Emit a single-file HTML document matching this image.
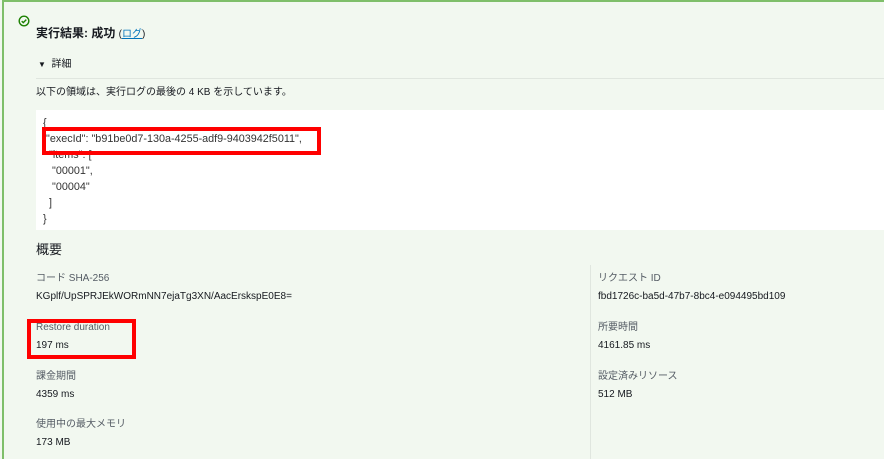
<!DOCTYPE html>
<html><head><meta charset="utf-8"><style>
body{margin:0;width:884px;height:459px;overflow:hidden;background:#f2f8f0;font-family:"Liberation Sans","Noto Sans CJK JP",sans-serif;color:#16191f;position:relative}
.a{position:absolute;white-space:nowrap;line-height:1}
.s{font-size:10px}
.l{color:#545b64}
</style></head><body>
<div style="position:absolute;left:2px;top:0;width:2px;height:459px;background:#7fbf6a"></div>
<div style="position:absolute;left:2px;top:0;width:882px;height:2px;background:#7fbf6a"></div>
<svg class="a" style="left:18px;top:15px" width="12" height="12" viewBox="0 0 12 12"><circle cx="6" cy="6" r="4.8" fill="none" stroke="#1d8102" stroke-width="1.4"/><path d="M3.7 6.1l1.6 1.5 3-3" fill="none" stroke="#1d8102" stroke-width="1.4"/></svg>
<div class="a" style="left:36px;top:27px;font-size:12px;font-weight:bold">実行結果: 成功 <span style="font-weight:normal;font-size:10px">(<span style="color:#0073bb;text-decoration:underline">ログ</span>)</span></div>
<div class="a s" style="left:38px;top:60px"><span style="font-size:8px">▼</span>&nbsp; 詳細</div>
<div style="position:absolute;left:36px;top:78px;width:848px;height:1px;background:#e0e6df"></div>
<div class="a s" style="left:36px;top:88px">以下の領域は、実行ログの最後の 4 KB を示しています。</div>
<div style="position:absolute;left:36px;top:110px;width:848px;height:120px;background:#fff"></div>
<div class="a" style="left:43px;top:115px;font-size:10.8px;line-height:16px;color:#333">{<br>&nbsp;"execId": "b91be0d7-130a-4255-adf9-9403942f5011",<br>&nbsp;&nbsp;"items": [<br>&nbsp;&nbsp;&nbsp;"00001",<br>&nbsp;&nbsp;&nbsp;"00004"<br>&nbsp;&nbsp;]<br>}</div>
<div style="position:absolute;left:42px;top:127px;width:271px;height:20px;border:4px solid #f00"></div>
<div class="a" style="left:36px;top:243px;font-size:13px">概要</div>
<div style="position:absolute;left:590px;top:265px;width:1px;height:194px;background:#e0e6df"></div>
<div class="a s l" style="left:36px;top:274px">コード SHA-256</div>
<div class="a s" style="left:36px;top:292px">KGplf/UpSPRJEkWORmNN7ejaTg3XN/AacErskspE0E8=</div>
<div class="a s l" style="left:36px;top:323px">Restore duration</div>
<div class="a s" style="left:36px;top:341px">197 ms</div>
<div style="position:absolute;left:27px;top:319px;width:101px;height:32px;border:4px solid #f00"></div>
<div class="a s l" style="left:36px;top:372px">課金期間</div>
<div class="a s" style="left:36px;top:390px">4359 ms</div>
<div class="a s l" style="left:36px;top:420px">使用中の最大メモリ</div>
<div class="a s" style="left:36px;top:438px">173 MB</div>
<div class="a s l" style="left:598px;top:274px">リクエスト ID</div>
<div class="a s" style="left:598px;top:292px">fbd1726c-ba5d-47b7-8bc4-e094495bd109</div>
<div class="a s l" style="left:598px;top:323px">所要時間</div>
<div class="a s" style="left:598px;top:341px">4161.85 ms</div>
<div class="a s l" style="left:598px;top:372px">設定済みリソース</div>
<div class="a s" style="left:598px;top:390px">512 MB</div>
</body></html>
